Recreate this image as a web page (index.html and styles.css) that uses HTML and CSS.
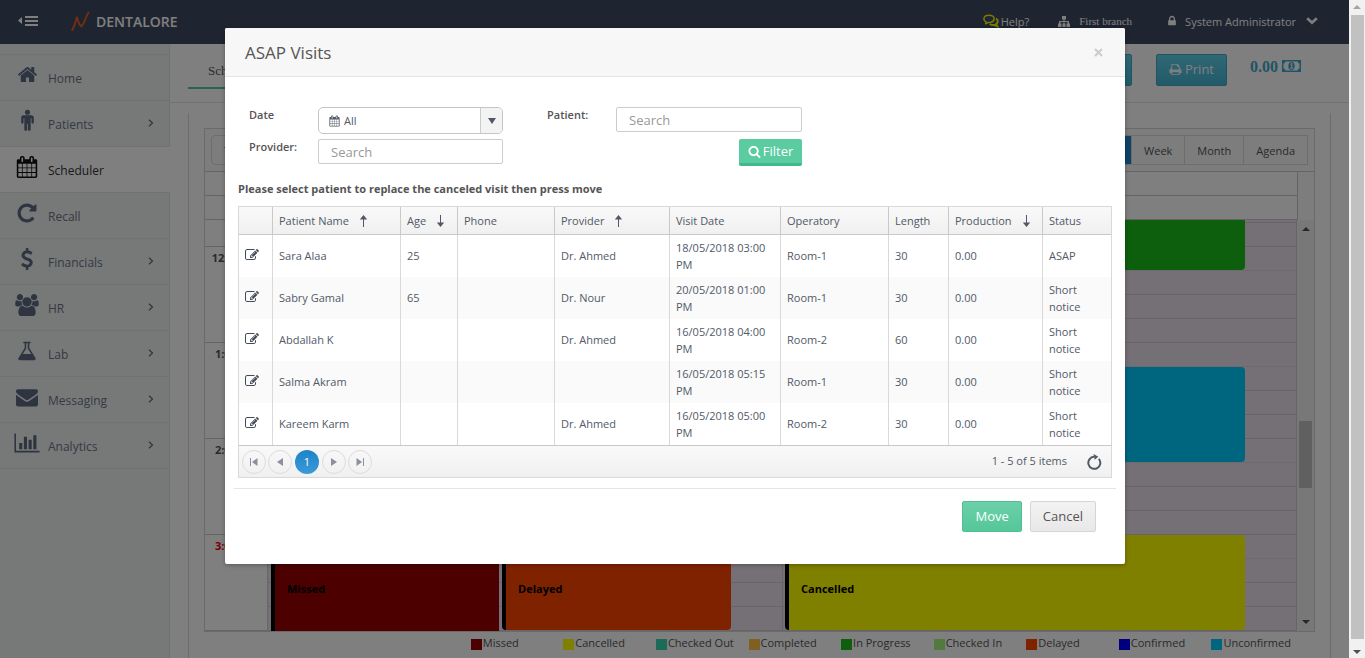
FILE: index.html
```html
<!DOCTYPE html>
<html lang="en">
<head>
<meta charset="utf-8">
<title>Dentalore - Scheduler</title>
<link rel="stylesheet" href="styles.css">
</head>
<body>
<svg class="defs" aria-hidden="true">
  <symbol id="i-edit" viewBox="0 0 1792 1792"><path d="M888 1184l116-116-152-152-116 116v56h96v96h56zm440-720q-16-16-33 1l-350 350q-17 17-1 33t33-1l350-350q17-17 1-33zm80 594v190q0 119-84.5 203.5t-203.5 84.5h-832q-119 0-203.5-84.5t-84.5-203.5v-832q0-119 84.5-203.5t203.5-84.5h832q63 0 117 25 15 7 18 23 3 17-9 29l-49 49q-14 14-32 8-23-6-45-6h-832q-66 0-113 47t-47 113v832q0 66 47 113t113 47h832q66 0 113-47t47-113v-126q0-13 9-22l64-64q15-15 35-7t20 29zm-96-738l288 288-672 672h-288v-288zm444 132l-92 92-288-288 92-92q28-28 68-28t68 28l152 152q28 28 28 68t-28 68z"/></symbol>
  <symbol id="i-cal" viewBox="0 0 1792 1792"><path d="M192 1664h288v-288h-288v288zm352 0h320v-288h-320v288zm-352-352h288v-320h-288v320zm352 0h320v-320h-320v320zm-352-384h288v-288h-288v288zm736 736h320v-288h-320v288zm-384-736h320v-288h-320v288zm768 736h288v-288h-288v288zm-384-352h320v-320h-320v320zm-352-864v-288q0-13-9.5-22.5t-22.5-9.5h-64q-13 0-22.5 9.5t-9.5 22.5v288q0 13 9.5 22.5t22.5 9.5h64q13 0 22.5-9.5t9.5-22.5zm736 864h288v-320h-288v320zm-384-384h320v-288h-320v288zm384 0h288v-288h-288v288zm32-480v-288q0-13-9.5-22.5t-22.5-9.5h-64q-13 0-22.5 9.5t-9.5 22.5v288q0 13 9.5 22.5t22.5 9.5h64q13 0 22.5-9.5t9.5-22.5zm384-64v1280q0 52-38 90t-90 38h-1408q-52 0-90-38t-38-90v-1280q0-52 38-90t90-38h128v-96q0-66 47-113t113-47h64q66 0 113 47t47 113v96h384v-96q0-66 47-113t113-47h64q66 0 113 47t47 113v96h128q52 0 90 38t38 90z"/></symbol>
  <symbol id="i-up" viewBox="0 0 9 12"><path d="M4 3h1v9H4zM4.500 0L8.200 4.600H.8z"/></symbol>
  <symbol id="i-down" viewBox="0 0 9 12"><path d="M4 0h1v9H4zM4.500 12L.8 7.400h7.400z"/></symbol>
  <symbol id="i-right" viewBox="0 0 6 8"><path d="M1 .7L4.500 4 1 7.300" fill="none" stroke="currentColor" stroke-width="1.200"/></symbol>
</svg>

<div class="app">
  <header class="topbar">
    <button class="menu-btn" aria-label="Toggle menu">
      <svg width="22" height="12" viewBox="0 0 22 12"><path d="M4 2v7L0 5.500zM7 1h13v2H7zM7 5h13v2H7zM7 9h13v2H7z"/></svg>
    </button>
    <svg class="logo" width="20" height="20" viewBox="0 0 20 20" fill="none"><path d="M1.200 19C3.500 15 4.800 11 5.800 6.300 7.300 9.500 7.500 14 10.500 15.300 13.500 12.500 14.500 6 17.500 1.500" stroke="#ee5c24" stroke-width="1.800" stroke-linecap="round" stroke-linejoin="round"/></svg>
    <span class="brand">DENTALORE</span>
    <nav class="topnav">
      <a href="#help" class="help">
        <svg width="16" height="14" viewBox="0 0 16 14" fill="none" stroke="#f4f400" stroke-width="1.500"><path d="M3.500 8.500C-.5 6.500 0 1.200 6 1.200s7 5.600 1.500 7.200c-1.200.3-2 .2-2.600.1L2.300 10z"/><path d="M13 4.500c2.500 1.500 2.300 4 .2 5.500l1 2.200-3-1.200c-1.700.2-3.200-.1-4.400-1" stroke-width="2"/></svg>Help?</a>
      <a href="#branch" class="branch">
        <svg width="12" height="11" viewBox="0 0 12 11"><path d="M4 0h4v3.500H6.500V5H11v2.500h1V11H8.500V7.500h1V6H6.500v1.500h1V11h-3V7.500h1V6h-3v1.500h1V11H0V7.500h1V5h4.500V3.500H4z"/></svg>First branch</a>
      <a href="#account" class="account">
        <svg width="12" height="12" viewBox="0 0 1792 1792"><path d="M640 768h512v-192q0-106-75-181t-181-75-181 75-75 181v192zm832 96v576q0 40-28 68t-68 28h-960q-40 0-68-28t-28-68v-576q0-40 28-68t68-28h32v-192q0-184 132-316t316-132 316 132 132 316v192h32q40 0 68 28t28 68z"/></svg>
        System Administrator
        <svg class="caret" width="12" height="8" viewBox="0 0 12 8" fill="none" stroke="currentColor" stroke-width="2.600"><path d="M1.200 1.200L6 5.800l4.800-4.600"/></svg></a>
    </nav>
  </header>

  <div class="body">
    <aside class="sidebar">
      <a href="#home"><svg width="21" height="21" viewBox="0 0 1792 1792"><path d="M1472 992v480q0 26-19 45t-45 19h-384v-384h-256v384h-384q-26 0-45-19t-19-45v-480q0-1 .5-3t.5-3l575-474 575 474q1 2 1 6zm223-69l-62 74q-8 9-21 11h-3q-13 0-21-7l-692-577-692 577q-12 8-24 7-13-2-21-11l-62-74q-8-10-7-23.500t11-21.500l719-599q32-26 76-26t76 26l244 204v-195q0-14 9-23t23-9h192q14 0 23 9t9 23v408l219 182q10 8 11 21.500t-7 23.500z"/></svg><span>Home</span></a>
      <a href="#patients"><svg width="19" height="23" viewBox="0 0 1536 1792"><path d="M1280 672v384q0 40-28 68t-68 28-68-28-28-68v-352h-64v912q0 46-33 79t-79 33-79-33-33-79v-464h-64v464q0 46-33 79t-79 33-79-33-33-79v-912h-64v352q0 40-28 68t-68 28-68-28-28-68v-384q0-80 56-136t136-56h640q80 0 136 56t56 136z"/><circle cx="768" cy="230" r="205"/></svg><span>Patients</span><svg class="chev" width="6" height="8"><use href="#i-right"/></svg></a>
      <a href="#scheduler" class="active"><svg width="22" height="22"><use href="#i-cal"/></svg><span>Scheduler</span></a>
      <a href="#recall"><svg width="22" height="22" viewBox="0 0 1792 1792"><path d="M1664 256v448q0 26-19 45t-45 19h-448q-42 0-59-40-17-39 14-69l138-138q-148-137-349-137-104 0-198.500 40.500t-163.500 109.500-109.500 163.500-40.500 198.500 40.500 198.500 109.500 163.500 163.500 109.500 198.500 40.500q119 0 225-52t179-147q7-10 23-12 15 0 25 9l137 138q9 8 9.500 20.500t-7.500 22.500q-109 132-264 204.500t-327 72.500q-156 0-298-61t-245-164-164-245-61-298 61-298 164-245 245-164 298-61q147 0 284.500 55.500t244.500 156.500l130-129q29-31 70-14 39 17 39 59z"/></svg><span>Recall</span></a>
      <a href="#financials"><svg width="22" height="22" viewBox="0 0 1792 1792"><path d="M1362 1185q0 153-99.500 263.500t-258.500 136.500v175q0 14-9 23t-23 9h-135q-13 0-22.500-9.500t-9.500-22.500v-175q-66-9-127.500-31t-101.500-44.500-74-48-46.500-37.500-17.500-18q-17-21-2-41l103-135q7-10 23-12 15-2 24 9l2 2q113 99 243 125 37 8 74 8 81 0 142.500-43t61.500-122q0-28-15-53t-33.500-42-58.500-37.500-66-32-80-32.500q-39-16-61.500-25t-61.500-26.500-62.500-31-56.500-35.500-53.500-42.500-43.500-49-35.500-58-21-66.500-8.500-78q0-138 98-242t255-134v-180q0-13 9.500-22.500t22.500-9.500h135q14 0 23 9t9 23v176q57 6 110.500 23t87 33.500 63.500 37.500 39 29 15 14q17 18 5 38l-81 146q-8 15-23 16-14 3-27-7-3-3-14.500-12t-39-26.500-58.500-32-74.500-26-85.500-11.500q-95 0-155 43t-60 111q0 26 8.500 48t29.500 41.500 39.500 33 56 31 60.500 27 70 27.500q53 20 81 31.500t76 35 75.500 42.500 62 50 53 63.500 31.500 76.500 13 94z"/></svg><span>Financials</span><svg class="chev" width="6" height="8"><use href="#i-right"/></svg></a>
      <a href="#hr"><svg width="24" height="22" viewBox="0 0 1920 1792"><path d="M593 896q-162 5-265 128h-134q-82 0-138-40.500t-56-118.500q0-353 124-353 6 0 43.500 21t97.500 42.500 119 21.500q67 0 133-23-5 37-5 66 0 143 81 256zm1071 637q0 120-73 189.500t-194 69.500h-874q-121 0-194-69.500t-73-189.500q0-53 3.500-103.500t14-109 26.500-108.500 43-97.500 62-81 85.500-53.500 111.500-20q10 0 43 21.500t73 48 107 48 135 21.500 135-21.500 107-48 73-48 43-21.500q61 0 111.500 20t85.500 53.500 62 81 43 97.500 26.500 108.500 14 109 3.500 103.500zm-1024-1277q0 106-75 181t-181 75-181-75-75-181 75-181 181-75 181 75 75 181zm704 384q0 159-112.500 271.500t-271.500 112.500-271.500-112.500-112.500-271.500 112.500-271.500 271.500-112.500 271.500 112.500 112.500 271.500zm576 225q0 78-56 118.500t-138 40.500h-134q-103-123-265-128 81-113 81-256 0-29-5-66 66 23 133 23 59 0 119-21.500t97.500-42.500 43.500-21q124 0 124 353zm-128-609q0 106-75 181t-181 75-181-75-75-181 75-181 181-75 181 75 75 181z"/></svg><span>HR</span><svg class="chev" width="6" height="8"><use href="#i-right"/></svg></a>
      <a href="#lab"><svg width="20" height="22" viewBox="0 0 1664 1792"><path d="M1527 1448q56 89 21.500 152.500t-140.500 63.500h-1152q-106 0-140.500-63.500t21.500-152.500l503-793v-399h-64q-26 0-45-19t-19-45 19-45 45-19h512q26 0 45 19t19 45-19 45-45 19h-64v399zm-779-725l-272 429h712l-272-429-20-31v-436h-128v436z"/></svg><span>Lab</span><svg class="chev" width="6" height="8"><use href="#i-right"/></svg></a>
      <a href="#messaging"><svg width="22" height="22" viewBox="0 0 1792 1792"><path d="M1792 710v794q0 66-47 113t-113 47h-1472q-66 0-113-47t-47-113v-794q44 49 101 87 362 246 497 345 57 42 92.500 65.500t94.500 48 110 24.500h2q51 0 110-24.500t94.500-48 92.500-65.500q170-123 498-345 57-39 100-87zm0-294q0 79-49 151t-122 123q-376 261-468 325-10 7-42.500 31t-54 38.500-52 32.500-57.500 27-50 9h-2q-23 0-50-9t-57.500-27-52-32.500-54-38.500-42.500-31q-91-64-262-182.500t-205-142.500q-62-42-117-115.500t-55-136.500q0-78 41.500-130t118.500-52h1472q65 0 112.500 47t47.500 113z"/></svg><span>Messaging</span><svg class="chev" width="6" height="8"><use href="#i-right"/></svg></a>
      <a href="#analytics"><svg width="26" height="22" viewBox="0 0 2048 1792"><path d="M640 896v512h-256v-512h256zm384-512v1024h-256v-1024h256zm1024 1152v128h-2048v-1536h128v1408h1920zm-640-896v768h-256v-768h256zm384-384v1152h-256v-1152h256z"/></svg><span>Analytics</span><svg class="chev" width="6" height="8"><use href="#i-right"/></svg></a>
    </aside>

    <main class="main">
      <div class="tabs">
        <a href="#tab" class="tab">Scheduler</a>
        <div class="actions">
          <button class="info">Refresh</button>
          <button class="info"><svg width="13" height="13" viewBox="0 0 1792 1792"><path d="M448 1536h896v-256h-896v256zm0-640h896v-384h-160q-40 0-68-28t-28-68v-160h-640v640zm1152 64q0-26-19-45t-45-19-45 19-19 45 19 45 45 19 45-19 19-45zm128 0v416q0 13-9.500 22.500t-22.500 9.500h-224v160q0 40-28 68t-68 28h-960q-40 0-68-28t-28-68v-160h-224q-13 0-22.500-9.500t-9.500-22.500v-416q0-79 56.500-135.500t135.500-56.500h64v-544q0-40 28-68t68-28h672q40 0 88 20t76 48l152 152q28 28 48 76t20 88v256h64q79 0 135.500 56.500t56.500 135.500z"/></svg>Print</button>
          <span class="balance">0.00 <svg width="19" height="12" viewBox="0 0 19 12"><path fill-rule="evenodd" d="M0 0h19v12H0zM3.500 1.500a2.200 2.200 0 0 1-2 2v5a2.200 2.200 0 0 1 2 2h12a2.200 2.200 0 0 1 2-2v-5a2.200 2.200 0 0 1-2-2z"/><ellipse cx="9.500" cy="6" rx="3.200" ry="4"/><path d="M8.300 4.300L9.800 3v5M8.200 8.200h3" fill="none" stroke="#fff"/></svg></span>
        </div>
      </div>

      <section class="panel">
        <div class="scheduler">
          <div class="toolbar">
            <button class="today">Today</button>
            <div class="views"><button class="on">Day</button><button>Week</button><button>Month</button><button>Agenda</button></div>
          </div>
          <div class="head"><div class="headcells"><div></div><div></div></div><div class="headend"></div></div>
          <div class="grid">
            <div class="times">
              <div class="lead"></div><div>12:00 PM</div><div>1:00 PM</div><div>2:00 PM</div><div class="now">3:00 PM</div>
            </div>
            <div class="lanes">
              <div class="slots"><i class="stub"></i><i></i><i class="dot"></i><i></i><i></i><i></i><i class="dot"></i><i></i><i></i><i></i><i class="dot"></i><i></i><i></i><i></i><i class="dot"></i><i></i><i></i><i></i></div>
              <div class="slots"><i class="stub"></i><i></i><i class="dot"></i><i></i><i></i><i></i><i class="dot"></i><i></i><i></i><i></i><i class="dot"></i><i></i><i></i><i></i><i class="dot"></i><i></i><i></i><i></i></div>
              <div class="event progress"></div>
              <div class="event unconfirmed"></div>
              <div class="event missed">Missed</div>
              <div class="event delayed">Delayed</div>
              <div class="event cancelled">Cancelled</div>
            </div>
            <div class="vscroll"><b class="up"></b><b class="thumb"></b><b class="down"></b></div>
          </div>
        </div>
        <ul class="legend">
          <li><i class="c1"></i>Missed</li><li><i class="c2"></i>Cancelled</li><li><i class="c3"></i>Checked Out</li><li><i class="c4"></i>Completed</li><li><i class="c5"></i>In Progress</li><li><i class="c6"></i>Checked In</li><li><i class="c7"></i>Delayed</li><li><i class="c8"></i>Confirmed</li><li><i class="c9"></i>Unconfirmed</li>
        </ul>
      </section>
    </main>
  </div>

  <div class="backdrop">
    <div class="modal" role="dialog" aria-labelledby="dlg-title">
      <div class="modal-head"><h1 id="dlg-title">ASAP Visits</h1><button class="close" aria-label="Close"><svg width="9" height="9" viewBox="0 0 9 9"><path d="M1 1l7 7M8 1L1 8" stroke="#ccc" stroke-width="2"/></svg></button></div>
      <div class="modal-body">
        <form class="filters">
          <label for="date">Date</label>
          <div class="select"><svg width="11" height="12"><use href="#i-cal"/></svg><select id="date"><option>All</option></select><span class="arrow"></span></div>
          <label for="patient" class="second">Patient:</label>
          <input id="patient" type="text" placeholder="Search">
          <label for="provider">Provider:</label>
          <input id="provider" type="text" placeholder="Search">
          <button type="button" class="filter"><svg width="13" height="13" viewBox="0 0 1792 1792"><path d="M1216 832q0-185-131.500-316.500t-316.500-131.500-316.500 131.500-131.500 316.500 131.500 316.500 316.500 131.500 316.500-131.500 131.500-316.500zm512 832q0 52-38 90t-90 38q-54 0-90-38l-343-342q-179 124-399 124-143 0-273.500-55.500t-225-150-150-225-55.500-273.500 55.500-273.500 150-225 225-150 273.500-55.500 273.500 55.500 225 150 150 225 55.500 273.500q0 220-124 399l343 343q37 37 37 90z"/></svg>Filter</button>
        </form>
        <p class="hint">Please select patient to replace the canceled visit then press move</p>
        <table class="visits">
          <colgroup><col class="w1"><col class="w2"><col class="w3"><col class="w4"><col class="w5"><col class="w6"><col class="w7"><col class="w8"><col class="w9"><col></colgroup>
          <thead><tr><th></th><th>Patient Name<svg class="sort" width="9" height="12"><use href="#i-up"/></svg></th><th>Age<svg class="sort" width="9" height="12"><use href="#i-down"/></svg></th><th>Phone</th><th>Provider<svg class="sort" width="9" height="12"><use href="#i-up"/></svg></th><th>Visit Date</th><th>Operatory</th><th>Length</th><th>Production<svg class="sort" width="9" height="12"><use href="#i-down"/></svg></th><th>Status</th></tr></thead>
          <tbody>
            <tr><td><button class="edit" aria-label="Edit"><svg width="14" height="14"><use href="#i-edit"/></svg></button></td><td>Sara Alaa</td><td>25</td><td></td><td>Dr. Ahmed</td><td>18/05/2018 03:00 PM</td><td>Room-1</td><td>30</td><td>0.00</td><td>ASAP</td></tr>
            <tr><td><button class="edit" aria-label="Edit"><svg width="14" height="14"><use href="#i-edit"/></svg></button></td><td>Sabry Gamal</td><td>65</td><td></td><td>Dr. Nour</td><td>20/05/2018 01:00 PM</td><td>Room-1</td><td>30</td><td>0.00</td><td>Short notice</td></tr>
            <tr><td><button class="edit" aria-label="Edit"><svg width="14" height="14"><use href="#i-edit"/></svg></button></td><td>Abdallah K</td><td></td><td></td><td>Dr. Ahmed</td><td>16/05/2018 04:00 PM</td><td>Room-2</td><td>60</td><td>0.00</td><td>Short notice</td></tr>
            <tr><td><button class="edit" aria-label="Edit"><svg width="14" height="14"><use href="#i-edit"/></svg></button></td><td>Salma Akram</td><td></td><td></td><td></td><td>16/05/2018 05:15 PM</td><td>Room-1</td><td>30</td><td>0.00</td><td>Short notice</td></tr>
            <tr><td><button class="edit" aria-label="Edit"><svg width="14" height="14"><use href="#i-edit"/></svg></button></td><td>Kareem Karm</td><td></td><td></td><td>Dr. Ahmed</td><td>16/05/2018 05:00 PM</td><td>Room-2</td><td>30</td><td>0.00</td><td>Short notice</td></tr>
          </tbody>
        </table>
        <div class="pager">
          <button aria-label="First page"><svg width="10" height="8" viewBox="0 0 10 8"><path d="M1 0h1v8H1zM8.500 0v8L3 4z"/></svg></button>
          <button aria-label="Previous page"><svg width="10" height="8" viewBox="0 0 10 8"><path d="M8 0v8L2 4z"/></svg></button>
          <button class="current">1</button>
          <button aria-label="Next page"><svg width="10" height="8" viewBox="0 0 10 8"><path d="M2 0v8l6-4z"/></svg></button>
          <button aria-label="Last page"><svg width="10" height="8" viewBox="0 0 10 8"><path d="M8 0h1v8H8zM1.500 0v8L7 4z"/></svg></button>
          <span class="count">1 - 5 of 5 items</span>
          <button class="reload" aria-label="Refresh"><svg width="16" height="16" viewBox="0 0 16 16"><path d="M12.800 4.800A6 6 0 1 1 8 2.800" fill="none" stroke="currentColor" stroke-width="2"/><path d="M7.500 0l4.800 2.800-3.600 3z"/></svg></button>
        </div>
      </div>
      <div class="modal-foot"><button class="move">Move</button><button class="cancel">Cancel</button></div>
    </div>
  </div>
</div>
<div class="page-scroll"><b class="up"></b><b class="thumb"></b><b class="down"></b></div>
</body>
</html>
```
FILE: styles.css
```css
* { box-sizing: border-box; }
body { margin: 0; display: flex; height: 100vh; overflow: hidden; font: 13px "Open Sans", "Noto Sans", sans-serif; color: #555; background: #fff; }
button, input, select { font: inherit; color: inherit; margin: 0; }
button { cursor: pointer; }
a { color: inherit; text-decoration: none; }
svg { fill: currentColor; flex: none; }
svg[fill="none"] { fill: none; }
.defs { position: absolute; width: 0; height: 0; }
.app { position: relative; flex: 1; min-width: 0; display: flex; flex-direction: column; overflow: hidden; }

.topbar { flex: none; height: 44px; padding: 0 31px 2px 18px; background: #3e4a60; color: #fff; display: flex; align-items: center; }
.topbar .menu-btn { border: 0; padding: 0; background: none; display: flex; width: 53px; }
.logo { margin-right: 5px; }
.brand { font-size: 14px; font-weight: 600; }
.topnav { margin-left: auto; display: flex; align-items: center; font-size: 11px; }
.topnav a { display: flex; align-items: center; }
.help { gap: 2px; }
.branch { margin-left: 29px; gap: 9px; font-family: "Liberation Serif", serif; font-size: 11px; }
.account { margin-left: 34px; gap: 7px; }
.caret { margin-left: 3px; }

.body { flex: 1; display: flex; min-height: 0; }
.sidebar { width: 170px; flex: none; padding-top: 10px; background: #ecf2ef; border-right: 1px solid #dfe4e2; font-size: 12px; }
.sidebar a { display: grid; grid-template-columns: 54px 1fr 21px; height: 46px; padding-bottom: 2px; align-items: center; border-top: 1px solid #dfe4e2; color: #5c6880; }
.sidebar a:last-child { height: 47px; border-bottom: 1px solid #dfe4e2; }
.sidebar a > svg:first-child { justify-self: center; margin-bottom: 4px; }
.sidebar span { color: #6d7488; margin: 3px 0 0 -6px; }
.sidebar .active { background: #fff; margin-right: -1px; color: #111; }
.sidebar .active span { color: #333; }

.main { flex: 1; min-width: 0; display: flex; flex-direction: column; background: #fff; }
.tabs { flex: none; height: 59px; padding: 10px 48px 0 18px; border-bottom: 1px solid #e4e4e4; display: flex; justify-content: space-between; align-items: flex-start; }
.tab { padding: 0 20px; line-height: 33px; border-bottom: 2px solid #56c89c; font-family: "Liberation Serif", serif; }
.actions { display: flex; gap: 24px; }
.info { display: flex; align-items: center; gap: 3px; height: 32px; padding: 0 12px 2px; color: #fff; border: 1px solid #3fa9c6; border-radius: 2px; background: linear-gradient(#60cfea, #44b5d4); }
.balance { margin-left: -1px; padding-top: 4px; color: #3fa9cc; font: bold 16px/18px "Liberation Serif", serif; }
.panel { flex: 1; margin: 10px 18px 0; padding: 15px; border: 1px solid #d8d8d8; border-width: 0 1px; overflow: hidden; }
.scheduler { border: 1px solid #d4d4d4; }
.toolbar { height: 43px; padding: 6px; display: flex; justify-content: space-between; background: #fafafa; border-bottom: 1px solid #c8c8c8; }
.toolbar button { height: 30px; padding: 0 12px; border: 1px solid #dadada; background: #fafafa; font-size: 11px; }
.toolbar .today { border-radius: 4px; color: #c0392b; }
.views { display: flex; }
.views button { border-left-width: 0; }
.views button.on { background: #1f86cc; color: #fff; }
.head { display: flex; height: 48px; }
.headcells { flex: 1; border-right: 1px solid #c8c8c8; }
.headcells div { height: 24px; border-bottom: 1px solid #c8c8c8; }
.headend { width: 16px; background: #fafafa; }
.grid { display: flex; height: 411px; overflow: hidden; }
.times { width: 63px; border-right: 1px solid #d0d0d0; font-size: 11px; font-weight: 700; text-align: center; color: #555; }
.times div { height: 96px; padding-top: 3px; border-bottom: 1px solid #c8c8c8; }
.times .lead { height: 27px; }
.times .now { color: #e00; }
.lanes { position: relative; flex: 1; display: flex; background: #ebe1eb; }
.slots { flex: 1; border-right: 1px solid #d0c8d0; }
.slots i { display: block; height: 24px; border-bottom: 1px solid #d0c8d0; }
.slots .stub { height: 3px; }
.slots .dot { border-bottom-style: dotted; }
.event { position: absolute; padding: 47px 12px 0; border-left: 4px solid #000; border-radius: 4px; color: #000; font-size: 11px; font-weight: 700; line-height: 14px; }
.progress { left: 51%; right: 52px; top: 0; height: 50px; background: #1abf1a; border-radius: 0 0 4px 4px; }
.unconfirmed { left: 51%; right: 52px; top: 147px; height: 95px; background: #00caff; }
.missed { left: 3px; right: 798px; top: 315px; height: 96px; background: #990000; border-radius: 0; }
.delayed { left: 234px; right: 566px; top: 315px; height: 95px; background: #ff4500; }
.cancelled { left: 517px; right: 52px; top: 315px; height: 95px; background: #ff0; }
.vscroll, .page-scroll { background: #f1f1f1; display: flex; flex-direction: column; align-items: center; }
.vscroll { width: 17px; padding: 7px 0; }
.vscroll .thumb { width: 13px; height: 67px; background: #c1c1c1; margin: 190px 0 auto; }
.up, .down { border: 4px solid transparent; }
.up { border-top: 0; border-bottom-color: #505050; }
.down { border-bottom: 0; border-top-color: #505050; }
.legend { list-style: none; margin: 3px 11px 0 auto; padding: 0; width: 75%; display: grid; grid-template-columns: repeat(9, 1fr); font-size: 11px; line-height: 15px; white-space: nowrap; }
.legend li { display: flex; gap: 1px; align-items: flex-start; }
.legend i { width: 11px; height: 11px; margin-top: 4px; }
.c1 { background: #990000; } .c2 { background: #ff0; } .c3 { background: #38d4b0; } .c4 { background: #ffc040; } .c5 { background: #1abf1a; }
.c6 { background: #a4f27c; } .c7 { background: #ff4500; } .c8 { background: #00f; } .c9 { background: #00caff; }

.page-scroll { width: 16px; flex: none; padding: 5px 0 4px; }
.page-scroll .up { border-bottom-color: #a3a3a3; }
.page-scroll .thumb { width: 13px; flex: 1; margin: 6px 0 11px; background: #c1c1c1; }

.backdrop { position: absolute; inset: 0; padding: 28px 0 0 1px; background: rgba(0, 0, 0, .5); display: flex; justify-content: center; align-items: flex-start; }
.modal { width: 900px; max-width: 100%; background: #fff; border-radius: 2px; box-shadow: 0 1px 4px rgba(0, 0, 0, .3); overflow: hidden; color: #515967; }
.modal-head { height: 49px; padding: 0 22px 0 20px; display: flex; align-items: center; justify-content: space-between; background: #f7f7f7; border-bottom: 1px solid #e5e5e5; }
.modal-head h1 { margin: 0; font-size: 17px; font-weight: 400; color: #555; }
.close { padding: 0; border: 0; background: none; display: flex; }
.modal-body { padding: 30px 13px 0; font-size: 11px; }
.filters { display: grid; grid-template-columns: 69px 185px 113px 186px; row-gap: 5px; margin-left: 11px; align-items: start; }
.filters label { line-height: 16px; font-weight: 600; color: #555; }
.filters .second { padding-left: 44px; }
.filters input { width: 100%; height: 25px; padding: 0 12px; border: 1px solid #ccc; border-radius: 2px; font-size: 13px; background: #fff; }
.filters input::placeholder { color: #999; opacity: 1; }
.select { position: relative; height: 27px; border: 1px solid #c5c5c5; border-radius: 5px; overflow: hidden; display: flex; align-items: center; padding-left: 10px; }
.select select { appearance: none; flex: 1; height: 25px; padding: 0 4px; border: 0; background: none; }
.arrow { width: 22px; height: 25px; border-left: 1px solid #ccc; background: #f3f3f3; display: grid; place-items: center; }
.arrow::after { content: ""; border: 4px solid transparent; border-top: 6px solid #515967; border-bottom: 0; }
.filter { grid-column: 4; justify-self: end; width: 63px; height: 27px; padding: 0; border: 0; border-bottom: 3px solid #3fba8b; border-radius: 2px; background: #5bcba0; color: #fff; font-size: 13px; display: flex; align-items: center; justify-content: center; gap: 2px; }
.hint { margin: 15px 0 9px; line-height: 16px; font-weight: 700; color: #555; }
.visits { width: 100%; table-layout: fixed; border-collapse: separate; border-spacing: 0; border: 1px solid #d9d9d9; border-bottom: 0; line-height: 17px; }
.w1 { width: 34px; } .w2 { width: 128px; } .w3 { width: 57px; } .w4 { width: 97px; } .w5 { width: 115px; } .w6 { width: 111px; } .w7 { width: 108px; } .w8 { width: 60px; } .w9 { width: 94px; }
.visits th { height: 28px; padding: 0 6px; text-align: left; font-weight: 400; white-space: nowrap; border-bottom: 1px solid #c9c9c9; border-right: 1px solid #c9c9c9; background: linear-gradient(#f9f9f9, #f0f0f0); }
.visits td { height: 42px; padding: 3px 6px 4px; border-right: 1px solid #d9d9d9; vertical-align: middle; }
.visits th:last-child, .visits td:last-child { border-right: 0; }
.visits td:last-child { padding-right: 24px; }
.visits tr:nth-child(even) td { background: #fafafa; }
.sort { margin-left: 10px; vertical-align: -2px; }
.edit { display: flex; padding: 0; border: 0; background: none; margin-bottom: 1px; color: #444b59; }
.pager { display: flex; align-items: center; gap: 2px; height: 33px; padding: 0 3px; border: 1px solid #d9d9d9; border-top-color: #c9c9c9; background: linear-gradient(#f9f9f9, #f0f0f0); }
.pager button { width: 24px; height: 24px; padding: 0; border: 1px solid #dcdcdc; border-radius: 50%; background: none; color: #8a909c; display: grid; place-items: center; }
.pager .current { margin: 0 1px; border: 0; background: linear-gradient(#1c84c9, #3b9ad8); color: #fff; }
.count { margin-left: auto; padding-bottom: 2px; }
.pager .reload { border: 0; margin-left: 13px; margin-right: 2px; color: #515967; }
.modal-foot { margin: 10px 9px 0; padding: 12px 20px 32px; border-top: 1px solid #e5e5e5; display: flex; justify-content: flex-end; gap: 8px; }
.modal-foot button { height: 31px; padding: 0 12px 1px; border: 1px solid #d5d5d5; border-radius: 2px; background: linear-gradient(#f3f3f3, #e8e8e8); color: #555; }
.modal-foot .move { border-color: #4fc094; background: linear-gradient(#6bd0a8, #55c799); color: #fff; }
```
